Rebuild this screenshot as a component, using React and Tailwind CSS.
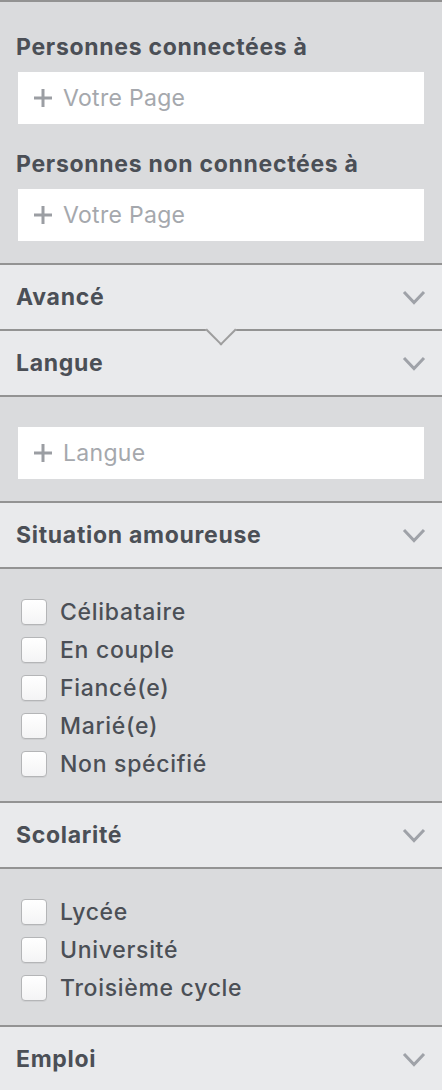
import React from 'react';

const font = { fontFamily: 'Inter, "Liberation Sans", Arial, sans-serif' };

const Chevron = () => (
  <svg width="24" height="15" viewBox="0 0 24 15" className="shrink-0">
    <polyline points="2,2 12,12.5 22,2" fill="none" stroke="#9fa2a8" strokeWidth="3" />
  </svg>
);

const Plus = () => (
  <svg width="20" height="20" viewBox="0 0 20 20" className="shrink-0">
    <path d="M10 1v18M1 10h18" stroke="#9b9ea3" strokeWidth="3" />
  </svg>
);

const Field = ({ placeholder }) => (
  <div className="h-[52px] bg-white flex items-center gap-[10px] pl-[15px]">
    <Plus />
    <span className="text-[23px] tracking-[0.3px] text-[#a5a8ad]">{placeholder}</span>
  </div>
);

const Header = ({ title, notch }) => (
  <div className="relative h-[66px] bg-[#e9eaec] border-b-2 border-[#939393] flex items-center justify-between pl-4 pr-4">
    <span className="text-[23px] tracking-[0.7px] font-bold text-[#4b4f56]">{title}</span>
    <Chevron />
    {notch && (
      <div className="absolute z-10 left-[210px] bottom-[-12px] w-[22px] h-[22px] rotate-45 bg-[#e9eaec] border-r-2 border-b-2 border-[#9d9d9d]" />
    )}
  </div>
);

const Check = ({ label }) => (
  <label className="h-[38px] flex items-center gap-[13px] pl-[21px]">
    <span className="w-[26px] h-[26px] rounded-[4px] border border-[#b4b5b7] bg-gradient-to-b from-white to-[#f4f4f5] shadow-[0_1px_0_rgba(0,0,0,0.05)]" />
    <span className="text-[23px] tracking-[0.7px] font-medium text-[#4b4f56]">{label}</span>
  </label>
);

const Label = ({ children }) => (
  <div className="text-[23px] tracking-[0.7px] leading-[28px] font-bold text-[#4b4f56] pl-4">{children}</div>
);

export default function App() {
  return (
    <div style={font} className="w-[442px] h-[1090px] overflow-hidden bg-[#dadbdd] border-t-2 border-[#929292]">
      <section className="pt-[31px] pb-[22px] border-b-2 border-[#939393]">
        <Label>Personnes connectées à</Label>
        <div className="px-[18px] mt-[11px]">
          <Field placeholder="Votre Page" />
        </div>
        <div className="mt-[26px]">
          <Label>Personnes non connectées à</Label>
        </div>
        <div className="px-[18px] mt-[11px]">
          <Field placeholder="Votre Page" />
        </div>
      </section>

      <Header title="Avancé" notch />
      <Header title="Langue" />

      <section className="pt-[30px] pb-[22px] px-[18px] border-b-2 border-[#939393]">
        <Field placeholder="Langue" />
      </section>

      <Header title="Situation amoureuse" />
      <section className="pt-6 pb-[18px] border-b-2 border-[#939393]">
        {['Célibataire', 'En couple', 'Fiancé(e)', 'Marié(e)', 'Non spécifié'].map((l) => (
          <Check key={l} label={l} />
        ))}
      </section>

      <Header title="Scolarité" />
      <section className="pt-6 pb-[18px] border-b-2 border-[#939393]">
        {['Lycée', 'Université', 'Troisième cycle'].map((l) => (
          <Check key={l} label={l} />
        ))}
      </section>

      <Header title="Emploi" />
    </div>
  );
}
